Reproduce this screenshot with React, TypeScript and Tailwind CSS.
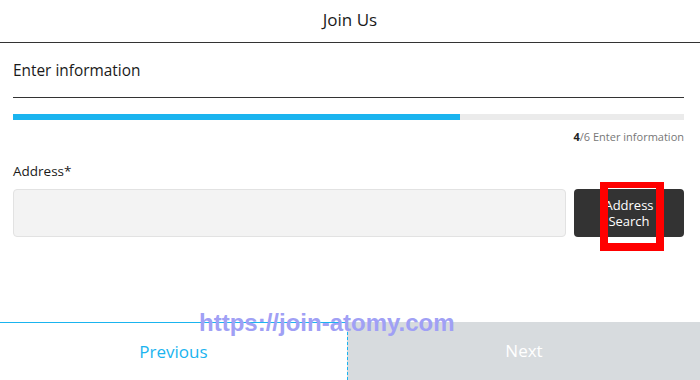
import React from "react";

export default function App() {
  return (
    <div
      className="relative flex h-[380px] w-[700px] flex-col bg-white text-[#1a1a1a]"
      style={{ fontFamily: '"Open Sans", "Noto Sans", sans-serif' }}
    >
      <div className="flex h-[43px] shrink-0 items-center justify-center border-b border-[#333] pb-[4px] text-[17px] leading-none">
        Join Us
      </div>

      <div className="flex flex-col pl-[13px] pr-[16px]">
        <div className="flex h-[55px] items-center border-b border-[#333] pt-[2px] text-[15.4px]">
          Enter information
        </div>

        <div className="mt-[16px] h-[6px] w-full bg-[#ebebeb]">
          <div className="h-full w-[447px] bg-[#1ab4ef]" />
        </div>

        <div className="mt-[10px] text-right text-[11px] leading-[14px] text-[#777]">
          <span className="font-bold text-[#222]">4</span>/6 Enter information
        </div>

        <div className="mt-[18px] text-[13.5px] leading-[18px] text-[#1a1a1a]">Address*</div>

        <div className="mt-[9px] flex h-[48px] gap-[8px]">
          <div className="h-full flex-1 rounded-[4px] border border-[#e2e2e2] bg-[#f3f3f3]" />
          <div className="relative flex h-full w-[110px] flex-col items-center justify-center rounded-[4px] bg-[#333] text-[13px] leading-[16px] text-white">
            <span>Address</span>
            <span>Search</span>
            <div className="absolute left-[26px] top-[-7px] h-[69px] w-[64px] border-[8px] border-t-[6px] border-[#ff0000]" />
          </div>
        </div>
      </div>

      <div className="mt-auto flex h-[58px] shrink-0">
        <div className="flex w-[347px] items-center justify-center border-t border-[#1ab4ef] text-[17px] text-[#1ab4ef]">
          Previous
        </div>
        <div className="flex flex-1 items-center justify-center border-l border-dashed border-[#1ab4ef] bg-[#d7dbde] text-[17px] text-white">
          Next
        </div>
      </div>

      <div
        className="absolute left-[199px] top-[309px] text-[24px] font-bold leading-[28px] text-[#a0a0f5]"
        style={{ fontFamily: '"Liberation Sans", Arial, sans-serif' }}
      >
        https://join-atomy.com
      </div>
    </div>
  );
}
